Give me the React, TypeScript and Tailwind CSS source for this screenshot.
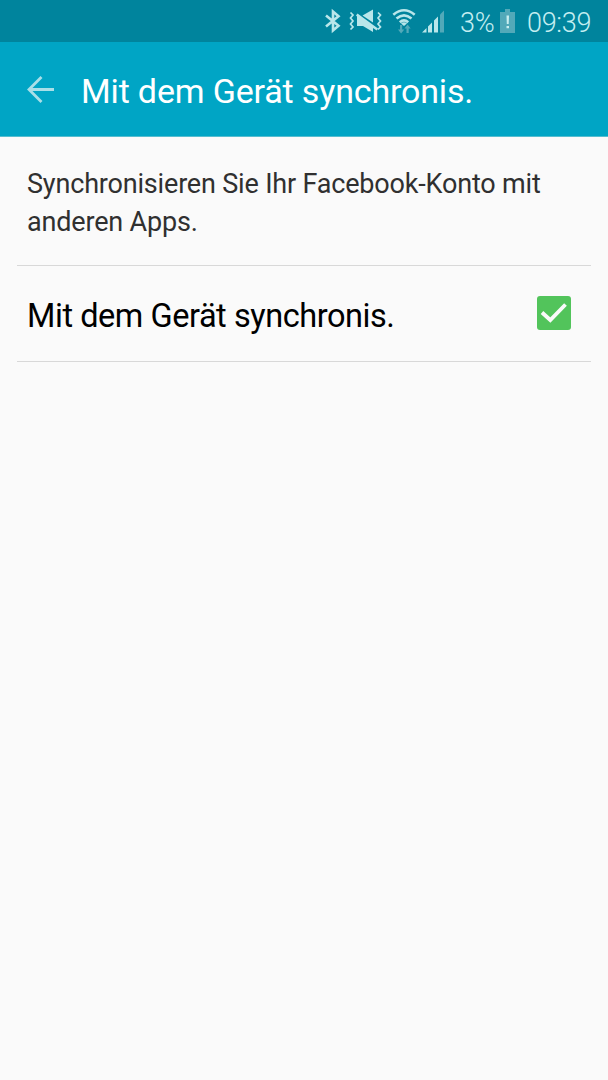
const BluetoothIcon = () => (
  <svg width="18" height="26" viewBox="0 0 18 26" fill="none" stroke="#b9e6ea" strokeWidth="2.6">
    <path d="M2 7.500L14.500 17.800L9 22.500V3.500L14.500 8.200L2 18.500" />
  </svg>
);

const MuteIcon = () => (
  <svg width="34" height="24" viewBox="0 0 34 24" fill="none">
    <g stroke="#b9e6ea" strokeWidth="1.7">
      <path d="M1.500 3.500L4 6L1.500 9L4 12L1.500 15L4 18L1.500 20.500" />
      <path d="M29 3.500L31.500 6L29 9L31.500 12L29 15L31.500 18L29 20.500" />
    </g>
    <path d="M13.500 6.500L24 0.500V13.500Z" fill="#b9e6ea" />
    <path d="M8.500 4.500L29 19.500L27.700 21.500L24 19V23L14 17H8V7.500L7 6.500Z" fill="#b9e6ea" />
  </svg>
);

const WifiIcon = () => (
  <svg width="24" height="26" viewBox="0 0 24 26" fill="none">
    <g stroke="#b9e6ea" strokeWidth="2.6">
      <path d="M1.300 6.800Q12 -2.300 22.700 6.800" />
      <path d="M4.500 10.600Q12 4 19.500 10.600" />
      <path d="M7.800 14.200Q12 10.400 16.200 14.200" />
    </g>
    <path d="M9 15.500Q12 13 15 15.500L12 18Z" fill="#b9e6ea" />
    <path d="M8 17H10.200V21.500H12.300L9.100 25.500L6 21.500H8ZM14.500 25H16.700V20.500H18.700L15.600 16.500L12.500 20.500H14.500Z" fill="#52a9b9" />
  </svg>
);

const SignalIcon = () => (
  <svg width="23" height="24" viewBox="0 0 23 24">
    <path d="M0 23.500L4.500 19V23.500ZM6 17.500L10 13.500V23.500H6ZM12 11.500L16 7.500V23.500H12Z" fill="#b9e6ea" />
    <path d="M18 5.500L22 1.500V23.500H18Z" fill="#52a9b9" />
  </svg>
);

const BatteryIcon = () => (
  <svg width="15" height="24" viewBox="0 0 15 24">
    <path d="M5 0H10V3H15V24H0V3H5Z" fill="#52a9b9" />
    <path d="M6.500 6.500H9L8.700 15H6.800ZM6.500 17H9V19.300H6.500Z" fill="#c9eef0" />
  </svg>
);

const StatusBar = () => (
  <div className="flex h-[42px] items-center bg-[#00849d] pl-[324px] text-[#c4eef1]">
    <BluetoothIcon />
    <div className="ml-[7px]"><MuteIcon /></div>
    <div className="ml-[9px]"><WifiIcon /></div>
    <div className="ml-[6px]"><SignalIcon /></div>
    <span className="ml-[15px] w-[40px] pt-[5px] text-[27px] font-light tracking-[-0.3px]">3%</span>
    <BatteryIcon />
    <span className="ml-[12px] pt-[5px] text-[27px] font-light tracking-[-0.3px]">09:39</span>
  </div>
);

const Header = () => (
  <header className="flex h-[95px] items-center border-b border-[#55bdcf] bg-[#00a5c5] pl-[26px] text-white">
    <button aria-label="Zurück">
      <svg width="30" height="28" viewBox="0 0 30 28" fill="none" stroke="#a9dfe8" strokeWidth="2.8">
        <path d="M28 14.500H3M15.500 2L3 14.500L15.500 27" />
      </svg>
    </button>
    <h1 className="ml-[25px] pt-[5px] text-[34px] tracking-[-0.16px]">Mit dem Gerät synchronis.</h1>
  </header>
);

export default function App() {
  return (
    <div className="min-h-screen bg-[#fafafa] font-['Roboto',sans-serif]">
      <StatusBar />
      <Header />
      <main className="mx-[17px]">
        <p className="h-[129px] border-b border-[#d8d8d8] px-[10px] pt-[28px] text-[27px] leading-[38px] tracking-[-0.18px] text-[#303030]">
          Synchronisieren Sie Ihr Facebook-Konto mit anderen Apps.
        </p>
        <label className="flex h-[96px] items-center justify-between border-b border-[#d8d8d8] pr-5 pl-[10px] text-[32.500px] tracking-[-0.45px] text-black">
          <span className="pt-[5px]">Mit dem Gerät synchronis.</span>
          <input type="checkbox" defaultChecked className="peer sr-only" />
          <span className="mb-px flex size-[34px] items-center justify-center rounded-[3px] bg-[#52c45b]">
            <svg width="34" height="34" viewBox="0 0 34 34" fill="none" stroke="#fafafa" strokeWidth="3.800">
              <path d="M5 16.500L13.300 24L28.500 8.500" />
            </svg>
          </span>
        </label>
      </main>
    </div>
  );
}
